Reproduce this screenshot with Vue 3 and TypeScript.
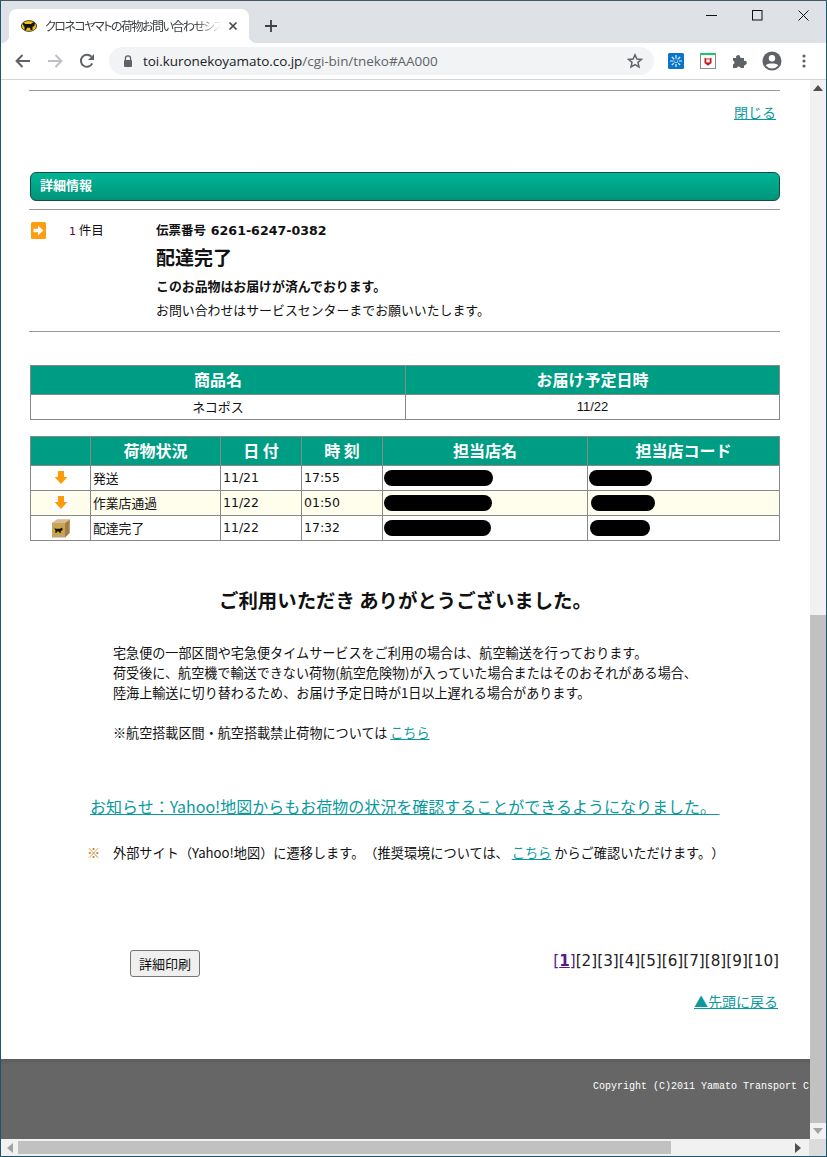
<script setup lang="ts">
interface Row {
  icon: 'arrow' | 'box'
  status: string
  date: string
  time: string
  nameW: number
  codeW: number
  codeX: number
  alt?: boolean
}
const rows: Row[] = [
  { icon: 'arrow', status: '発送', date: '11/21', time: '17:55', nameW: 109, codeW: 63, codeX: -1 },
  { icon: 'arrow', status: '作業店通過', date: '11/22', time: '01:50', nameW: 108, codeW: 64, codeX: 1, alt: true },
  { icon: 'box', status: '配達完了', date: '11/22', time: '17:32', nameW: 107, codeW: 60, codeX: 0 }
]
const pages = [2, 3, 4, 5, 6, 7, 8, 9, 10]
</script>

<template>
  <div class="window">
    <div class="tabstrip">
      <div class="tab">
        <svg class="fav" width="16" height="12" viewBox="0 0 16 12">
          <ellipse cx="8" cy="6" rx="7.6" ry="5.4" fill="#f2c00d" stroke="#222" stroke-width=".8" />
          <path d="M2.4 2.6 4.4 4H10L12 2.200 14 2.600 13.400 6 11.600 6.800 11.400 10H9.600L9 7.800H6L5.200 10H3.600L3.400 6.600 1.800 4.400Z" fill="#111" />
        </svg>
        <span class="tab-title">クロネコヤマトの荷物お問い合わせシス</span>
        <svg class="tab-x" width="10" height="10" viewBox="0 0 10 10">
          <path d="M1.5 1.5 8.5 8.5M8.5 1.5 1.5 8.5" stroke="#45484d" stroke-width="1.7" />
        </svg>
      </div>
      <svg class="plus" width="12" height="12" viewBox="0 0 12 12">
        <path d="M6 0V12M0 6H12" stroke="#3c4043" stroke-width="1.8" />
      </svg>
      <div class="win-ctrls">
        <span class="ctrl"><svg width="11" height="11" viewBox="0 0 11 11"><path d="M0 5.5H11" stroke="#111" /></svg></span>
        <span class="ctrl"><svg width="11" height="11" viewBox="0 0 11 11"><rect x=".5" y=".5" width="9.5" height="9.5" fill="none" stroke="#111" /></svg></span>
        <span class="ctrl"><svg width="11" height="11" viewBox="0 0 11 11"><path d="M.5.5 10.5 10.5M10.5.5.5 10.5" stroke="#111" /></svg></span>
      </div>
    </div>

    <div class="toolbar">
      <span class="tbtn"><svg width="16" height="14" viewBox="0 0 16 14"><path d="M15 7H2M7.5 1 1.6 7l5.9 6" fill="none" stroke="#5f6368" stroke-width="2" /></svg></span>
      <span class="tbtn"><svg width="16" height="14" viewBox="0 0 16 14"><path d="M1 7H14M8.5 1l5.9 6-5.9 6" fill="none" stroke="#bdc1c6" stroke-width="2" /></svg></span>
      <span class="tbtn"><svg width="16" height="16" viewBox="0 0 16 16"><path d="M13.3 10.4A6 6 0 1 1 12.3 3.6" fill="none" stroke="#5f6368" stroke-width="2" /><path d="M15 1V7H9Z" fill="#5f6368" /></svg></span>
      <div class="omnibox">
        <svg width="10" height="13" viewBox="0 0 10 13"><path d="M2.4 5V3.4a2.6 2.6 0 0 1 5.2 0V5" fill="none" stroke="#5f6368" stroke-width="1.3" /><rect x="1" y="5" width="8" height="7" rx="1" fill="#5f6368" /></svg>
        <span class="url"><span class="host">toi.kuronekoyamato.co.jp</span>/cgi-bin/tneko#AA000</span>
        <svg class="star" width="16" height="16" viewBox="0 0 16 16"><path d="M8 1.8 9.9 6l4.6.4-3.5 3 1 4.5L8 11.6l-4 2.3 1-4.5-3.5-3L6.1 6Z" fill="none" stroke="#5f6368" stroke-width="1.5" /></svg>
      </div>
      <div class="ext-row">
        <span class="tbtn"><svg width="16" height="16" viewBox="0 0 16 16"><rect width="16" height="16" rx="1.5" fill="#0a74c9" /><path d="M8 2V14M2 8H14M3.800 3.800 12.200 12.200M12.200 3.800 3.800 12.200" stroke="#e4f4fd" stroke-width="1.200" stroke-dasharray="3.500 1" /><circle cx="8" cy="8" r="1.400" fill="#0a74c9" /></svg></span>
        <span class="tbtn"><svg width="16" height="16" viewBox="0 0 16 16"><rect x=".5" y=".5" width="15" height="15" fill="#fff" stroke="#8b8b8b" /><rect width="16" height="2" fill="#17c96b" /><path d="M4.5 4.6 6 5.4H10L11.5 4.6V10L8 12.8 4.5 10Z" fill="#c9161d" /><rect x="6.3" y="6.4" width="3.4" height="3" fill="#fff" /></svg></span>
        <span class="tbtn"><svg width="16" height="16" viewBox="0 0 16 16"><path d="M1 5H4.2A2 2 0 0 1 8 3.4 2 2 0 0 1 8.6 5H12V8a2 2 0 0 1 1.6 3.8 2 2 0 0 1-1.6.6V15H8.8A2.2 2.2 0 0 0 4.600 15H1V11.500A2.100 2.100 0 0 0 1 7.500Z" fill="#5f6368" /></svg></span>
        <span class="tbtn"><svg width="20" height="20" viewBox="0 0 20 20"><circle cx="10" cy="10" r="9.500" fill="#5f6368" /><circle cx="10" cy="7.300" r="3.200" fill="#fff" /><path d="M3.800 14.500C5 11.900 15 11.900 16.200 14.500A8 8 0 0 1 3.800 14.500Z" fill="#fff" /></svg></span>
        <span class="tbtn"><svg width="4" height="14" viewBox="0 0 4 14"><circle cx="2" cy="2" r="1.600" fill="#5f6368" /><circle cx="2" cy="7" r="1.600" fill="#5f6368" /><circle cx="2" cy="12" r="1.600" fill="#5f6368" /></svg></span>
      </div>
    </div>

    <div class="viewport">
      <main class="page">
        <div class="content">
          <hr class="rule first" />
          <div class="close-row"><a class="link">閉じる</a></div>
          <div class="title-bar">詳細情報</div>
          <hr class="rule after-title" />

          <section class="item">
            <svg class="go" width="15" height="17" viewBox="0 0 15 17">
              <rect width="15" height="17" rx="1.500" fill="#ff9c0f" />
              <path d="M2.500 6.800H7V3.400L12.400 8.500 7 13.600V10.200H2.500Z" fill="#fff" />
            </svg>
            <div class="count"><span class="num">1</span> 件目</div>
            <div class="summary">
              <div class="slip">伝票番号 <span class="slipno">6261-6247-0382</span></div>
              <h2 class="state">配達完了</h2>
              <div class="strong">このお品物はお届けが済んでおります。</div>
              <div class="plain">お問い合わせはサービスセンターまでお願いいたします。</div>
            </div>
          </section>
          <hr class="rule after-item" />

          <table class="grid goods">
            <colgroup><col class="g1" /><col class="g2" /></colgroup>
            <thead><tr><th>商品名</th><th>お届け予定日時</th></tr></thead>
            <tbody><tr class="tall"><td class="center">ネコポス</td><td class="center narrow">11/22</td></tr></tbody>
          </table>

          <table class="grid track">
            <colgroup>
              <col class="c1" /><col class="c2" /><col class="c3" /><col class="c4" /><col class="c5" /><col class="c6" />
            </colgroup>
            <thead>
              <tr><th></th><th>荷物状況</th><th>日 付</th><th>時 刻</th><th>担当店名</th><th>担当店コード</th></tr>
            </thead>
            <tbody>
              <tr v-for="r in rows" :key="r.status" :class="{ alt: r.alt }">
                <td class="center icon-cell">
                  <svg v-if="r.icon === 'arrow'" class="down" width="18" height="18" viewBox="0 0 18 18">
                    <rect width="18" height="18" fill="#fff" />
                    <path d="M6 2H12V8H15.500L9 15 2.500 8H6Z" fill="#ff9a0a" />
                  </svg>
                  <svg v-else class="down" width="18" height="19" viewBox="0 0 18 19">
                    <path d="M0 4 5 .5H18L17.500 14 13 18.500H0Z" fill="#c4a268" />
                    <path d="M13 4V18.500L17.500 14V.8Z" fill="#a47d43" />
                    <path d="M0 4H13L17.500.8H5Z" fill="#dcbd88" />
                    <ellipse cx="6.500" cy="11" rx="5" ry="3.600" fill="#d9ad10" />
                    <path d="M2.400 8.800 4 9.800H8L10 8.600 10.800 11 8.800 12V14H7.600L7 12.400H5L4.400 14H3.400V11.600Z" fill="#111" />
                  </svg>
                </td>
                <td>{{ r.status }}</td>
                <td class="latin">{{ r.date }}</td>
                <td class="latin">{{ r.time }}</td>
                <td class="masked"><span class="redact" :style="{ width: r.nameW + 'px' }"></span></td>
                <td><span class="redact" :style="{ width: r.codeW + 'px', marginLeft: r.codeX + 'px' }"></span></td>
              </tr>
            </tbody>
          </table>

          <h2 class="thanks">ご利用いただき ありがとうございました。</h2>

          <div class="para">
            <p>宅急便の一部区間や宅急便タイムサービスをご利用の場合は、航空輸送を行っております。</p>
            <p>荷受後に、航空機で輸送できない荷物(航空危険物)が入っていた場合またはそのおそれがある場合、</p>
            <p>陸海上輸送に切り替わるため、お届け予定日時が1日以上遅れる場合があります。</p>
            <p class="note">※航空搭載区間・航空搭載禁止荷物については <a class="link">こちら</a></p>
          </div>

          <a class="link notice">お知らせ：Yahoo!地図からもお荷物の状況を確認することができるようになりました。 </a>

          <div class="warn">
            <span class="mark">※</span>
            <span class="warn-text">外部サイト（Yahoo!地図）に遷移します。（推奨環境については、 <a class="link">こちら</a> からご確認いただけます。）</span>
          </div>

          <div class="actions">
            <button class="print" type="button">詳細印刷</button>
            <nav class="pager">
              <span class="current">[<u>1</u>]</span><span v-for="p in pages" :key="p">[{{ p }}]</span>
            </nav>
          </div>
          <div class="back"><a class="link">▲先頭に戻る</a></div>
        </div>
        <footer class="foot">Copyright (C)2011 Yamato Transport C</footer>
      </main>

      <aside class="vscroll">
        <svg class="arrow-up" width="10" height="6" viewBox="0 0 10 6"><path d="M5 0 10 6H0Z" fill="#505050" /></svg>
        <div class="vthumb"></div>
        <svg class="arrow-down" width="10" height="6" viewBox="0 0 10 6"><path d="M0 0H10L5 6Z" fill="#a3a3a3" /></svg>
      </aside>
    </div>

    <div class="hscroll">
      <svg class="arrow-left" width="6" height="10" viewBox="0 0 6 10"><path d="M6 0V10L0 5Z" fill="#a3a3a3" /></svg>
      <div class="hthumb"></div>
      <svg class="arrow-right" width="6" height="10" viewBox="0 0 6 10"><path d="M0 0 6 5 0 10Z" fill="#505050" /></svg>
      <div class="corner"></div>
    </div>
  </div>
</template>

<style scoped>
.window {
  width: 827px;
  height: 1157px;
  box-sizing: border-box;
  display: flex;
  flex-direction: column;
  overflow: hidden;
  background: #fff;
  border: 1px solid #1e5569;
  border-top-color: #44586a;
  font-family: "Noto Sans CJK JP", "DejaVu Sans", sans-serif;
  color: #111;
  text-spacing-trim: space-all;
}

/* browser chrome */
.tabstrip {
  height: 42px;
  flex: none;
  background: #dee1e6;
  display: flex;
  align-items: flex-end;
  padding-left: 8px;
  position: relative;
}
.tab {
  width: 240px;
  height: 34px;
  background: #fff;
  border-radius: 8px 8px 0 0;
  display: flex;
  align-items: center;
  padding-left: 12px;
  box-sizing: border-box;
  position: relative;
}
.tab::before,
.tab::after {
  content: "";
  position: absolute;
  bottom: 0;
  width: 8px;
  height: 8px;
}
.tab::before {
  left: -8px;
  background: radial-gradient(circle at 0 0, transparent 8px, #fff 8.500px);
}
.tab::after {
  right: -8px;
  background: radial-gradient(circle at 100% 0, transparent 8px, #fff 8.500px);
}
.fav { flex: none; margin-right: 8px; }
.tab-title {
  width: 176px;
  overflow: hidden;
  white-space: nowrap;
  font-size: 12px;
  line-height: 18px;
  font-feature-settings: "palt";
  letter-spacing: -1.5px;
  color: #3c4043;
  -webkit-mask-image: linear-gradient(90deg, #000 86%, transparent);
  mask-image: linear-gradient(90deg, #000 86%, transparent);
}
.tab-x { margin-left: 7px; flex: none; }
.plus { margin: 0 0 11px 16px; flex: none; }
.win-ctrls {
  margin-left: auto;
  display: flex;
  align-self: flex-start;
}
.ctrl {
  width: 46px;
  height: 29px;
  display: flex;
  align-items: center;
  justify-content: center;
}
.toolbar {
  height: 37px;
  flex: none;
  box-sizing: border-box;
  background: #fff;
  border-bottom: 1px solid #d4d5d7;
  display: flex;
  align-items: center;
  padding-left: 6px;
}
.tbtn {
  width: 32px;
  height: 32px;
  flex: none;
  display: flex;
  align-items: center;
  justify-content: center;
}
.omnibox {
  margin-left: 6px;
  width: 545px;
  height: 28px;
  flex: none;
  box-sizing: border-box;
  border-radius: 14px;
  background: #f1f3f4;
  display: flex;
  align-items: center;
  padding: 0 11px 0 14px;
}
.url {
  margin-left: 10px;
  font-family: "Open Sans", "Noto Sans", sans-serif;
  font-size: 13.500px;
  letter-spacing: -0.05px;
  color: #5f6368;
  white-space: nowrap;
}
.host { color: #202124; }
.star { margin-left: auto; }
.ext-row {
  margin-left: 6px;
  display: flex;
}

/* viewport */
.viewport {
  flex: 1;
  min-height: 0;
  display: flex;
}
.page {
  width: 809px;
  flex: none;
  display: flex;
  flex-direction: column;
  overflow: hidden;
}
.content {
  padding-left: 28px;
  width: 779px;
  box-sizing: border-box;
  flex: 1;
  font-size: 13px;
}
.rule {
  border: 0;
  height: 1px;
  background: #999;
  margin: 0;
}
.rule.first { margin-top: 10px; }
.close-row {
  margin-top: 11px;
  line-height: 20px;
  text-align: right;
  padding-right: 4px;
  font-size: 14px;
}
.link {
  color: #0a9a9e;
  text-decoration: underline;
}
.title-bar {
  margin: 50px 0 0 1px;
  height: 29px;
  box-sizing: border-box;
  width: 750px;
  border: 1px solid #174c42;
  border-radius: 6px;
  background: linear-gradient(#00b596, #009479);
  color: #fff;
  font-size: 13px;
  font-weight: 700;
  line-height: 24px;
  padding-left: 9px;
}
.rule.after-title { margin-top: 8px; }
.item {
  display: flex;
  padding-top: 10px;
}
.go {
  margin: 2px 0 0 2px;
  flex: none;
}
.count {
  margin-left: 23px;
  width: 87px;
  flex: none;
  line-height: 20px;
  font-size: 12.500px;
}
.num { color: #660033; font-family: "DejaVu Sans", sans-serif; font-size: 11px; }
.summary { flex: 1; min-width: 0; }
.slip { line-height: 20px; font-weight: 700; font-size: 12.500px; }
.slipno { font-family: "DejaVu Sans", sans-serif; font-size: 12.600px; margin-left: 2px; }
.state {
  margin: 4px 0 0;
  font-size: 19px;
  line-height: 24px;
  font-weight: 700;
}
.strong {
  margin-top: 7px;
  line-height: 20px;
  font-weight: 700;
  font-size: 12.900px;
}
.plain {
  margin-top: 4px;
  line-height: 20px;
  font-size: 12.900px;
}
.rule.after-item { margin-top: 11px; }
.grid {
  border-collapse: collapse;
  table-layout: fixed;
  width: 749px;
  margin-left: 1px;
}
.grid th, .grid td {
  border: 1px solid #888;
  padding: 0;
  font-size: 12.800px;
  line-height: 18px;
}
.grid th {
  background: #009d85;
  color: #fff;
  font-size: 16px;
  font-weight: 700;
  height: 25px;
  padding-bottom: 3px;
  text-align: center;
}
.grid td {
  height: 24px;
  padding-left: 2px;
  white-space: nowrap;
}
.grid .tall td { height: 24px; font-size: 13px; }
.goods { margin-top: 33px; }
.g1 { width: 375px; }
.g2 { width: 374px; }
.track { margin-top: 16px; }
.c1 { width: 60px; }
.c2 { width: 130px; }
.c3 { width: 81px; }
.c4 { width: 81px; }
.c5 { width: 205px; }
.c6 { width: 192px; }
.grid td.center { text-align: center; padding-left: 0; }
.grid td.masked { padding-left: 1px; }
.narrow { font-family: "Liberation Sans", sans-serif; }
.latin { font-family: "DejaVu Sans", sans-serif; }
.grid td.latin { font-size: 12.500px; }
.alt td { background: #fffdeb; }
.down { display: block; margin: 0 auto; }
.redact {
  display: block;
  height: 16px;
  border-radius: 8px;
  background: #000;
}
.thanks {
  margin: 45px 0 0;
  padding-left: 2px;
  text-align: center;
  font-size: 19.400px;
  line-height: 28px;
  font-weight: 700;
  color: #111;
}
.para {
  margin: 29px 0 0 84px;
  font-size: 13.100px;
  line-height: 20px;
  white-space: nowrap;
}
.para p { margin: 0; }
.para .note { margin-top: 20px; }
.notice {
  display: block;
  margin: 51px 0 0 61px;
  font-size: 16px;
  line-height: 24px;
  white-space: pre;
}
.warn {
  margin: 25px 0 0 58px;
  line-height: 20px;
  display: flex;
  white-space: nowrap;
  font-size: 13.200px;
}
.mark {
  color: #c9801a;
  width: 26px;
  flex: none;
}
.actions {
  margin-top: 87px;
  display: flex;
  justify-content: space-between;
  height: 26px;
  padding-right: 1px;
}
.print {
  margin-left: 101px;
  width: 70px;
  height: 27px;
  padding: 0;
  box-sizing: border-box;
  background: #efefef;
  border: 1px solid #767676;
  border-radius: 3px;
  font: 13px/1 "Noto Sans CJK JP", sans-serif;
  color: #111;
}
.pager {
  margin-top: 1px;
  font-family: "DejaVu Sans", sans-serif;
  font-size: 15.200px;
  line-height: 20px;
  color: #222;
}
.current { color: #551a8b; }
.current u { font-weight: 700; }
.back {
  margin-top: 15px;
  line-height: 20px;
  text-align: right;
  padding-right: 2px;
  font-size: 14px;
}
.foot {
  flex: none;
  height: 80px;
  box-sizing: border-box;
  background: linear-gradient(#5c5c5c, #666 6px);
  padding: 21px 0 0 592px;
  color: #fff;
  font-family: "Liberation Mono", monospace;
  font-size: 10px;
  line-height: 14px;
  white-space: nowrap;
  overflow: hidden;
}
.vscroll {
  flex: 1;
  background: #f1f1f1;
  display: flex;
  flex-direction: column;
  align-items: center;
}
.arrow-up { margin-top: 5px; flex: none; }
.vthumb {
  flex: none;
  width: 100%;
  height: 508px;
  margin-top: 524px;
  background: #c1c1c1;
}
.arrow-down { margin-top: 5px; flex: none; }
.hscroll {
  height: 17px;
  flex: none;
  background: #f1f1f1;
  display: flex;
  align-items: center;
  position: relative;
  padding-left: 6px;
}
.arrow-left { flex: none; }
.hthumb {
  margin-left: 5px;
  width: 653px;
  height: 13px;
  background: #c1c1c1;
  flex: none;
}
.arrow-right { margin-left: 124px; flex: none; }
.corner {
  margin-left: auto;
  width: 17px;
  height: 17px;
  background: #dcdcdc;
  flex: none;
}
</style>

<style>
html, body { margin: 0; background: #fff; }
</style>
